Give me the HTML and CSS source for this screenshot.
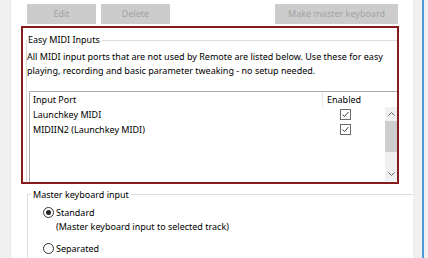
FILE: index.html
```html
<!DOCTYPE html>
<html>
<head>
<meta charset="utf-8">
<link rel="stylesheet" href="styles.css">
</head>
<body>
<div class="window">
  <div class="lstrip"></div>
  <div class="main">
    <div class="toolbar">
      <div class="btn btn-edit">Edit</div>
      <div class="btn btn-delete">Delete</div>
      <div class="btn btn-master">Make master keyboard</div>
    </div>
    <div class="highlight">
      <fieldset class="group group-easy">
        <legend class="legend-easy">Easy MIDI Inputs</legend>
        <p class="desc">All MIDI input ports that are not used by Remote are listed below. Use these for easy<br>playing, recording and basic parameter tweaking - no setup needed.</p>
        <div class="listview">
          <div class="lv-header">
            <div class="col-port">Input Port</div>
            <div class="col-enabled">Enabled</div>
          </div>
          <div class="lv-body">
            <div class="lv-rows">
              <div class="lv-row">
                <div class="col-port">Launchkey MIDI</div>
                <div class="col-enabled"><span class="check"><svg width="11" height="11" viewBox="0 0 11 11"><path d="M2.5 5.5 L4.5 7.5 L8.5 3" fill="none" stroke="#444" stroke-width="1"/></svg></span></div>
              </div>
              <div class="lv-row">
                <div class="col-port">MIDIIN2 (Launchkey MIDI)</div>
                <div class="col-enabled"><span class="check"><svg width="11" height="11" viewBox="0 0 11 11"><path d="M2.5 5.5 L4.5 7.5 L8.5 3" fill="none" stroke="#444" stroke-width="1"/></svg></span></div>
              </div>
            </div>
            <div class="scrollbar">
              <div class="sb-arrow"><svg width="7" height="4" viewBox="0 0 7 4"><path d="M0.5 3.5 L3.5 0.5 L6.5 3.5" fill="none" stroke="#606060" stroke-width="1"/></svg></div>
              <div class="sb-thumb"></div>
              <div class="sb-track"></div>
              <div class="sb-arrow"><svg width="7" height="4" viewBox="0 0 7 4"><path d="M0.5 0.5 L3.5 3.5 L6.5 0.5" fill="none" stroke="#606060" stroke-width="1"/></svg></div>
            </div>
          </div>
        </div>
      </fieldset>
    </div>
    <fieldset class="group group-master">
      <legend class="legend-master">Master keyboard input</legend>
      <div class="radio-row">
        <span class="radio checked"></span>
        <span>Standard</span>
      </div>
      <div class="radio-sub">(Master keyboard input to selected track)</div>
      <div class="radio-row radio-sep">
        <span class="radio"></span>
        <span>Separated</span>
      </div>
    </fieldset>
  </div>
  <div class="rstrip"><div class="blue"></div></div>
</div>
</body>
</html>
```

FILE: styles.css
```css
html, body {
  margin: 0;
  padding: 0;
  background: #ffffff;
}
body {
  font-family: "Noto Sans", "Open Sans", sans-serif;
  font-size: 9px;
  color: #000;
}
.window {
  display: flex;
  width: 428px;
  height: 258px;
  overflow: hidden;
}
.lstrip {
  width: 10px;
  background: #f0f0f0;
  border-right: 1px solid #e6e6e6;
  flex: none;
}
.main {
  width: 402px;
  flex: none;
  background: #fff;
  overflow: hidden;
}
.rstrip {
  width: 15px;
  flex: none;
  background: #f0f0f0;
  display: flex;
  padding-left: 9px;
  box-sizing: border-box;
}
.blue {
  width: 2px;
  background: #4a9ae0;
}
.toolbar {
  display: flex;
  margin-top: 4px;
  height: 20px;
  padding-left: 16px;
  padding-right: 15px;
  gap: 5px;
}
.btn {
  background: #cccccc;
  color: #a3a3a3;
  height: 20px;
  line-height: 20px;
  text-align: center;
  box-sizing: border-box;
}
.btn-edit, .btn-delete { width: 69px; }
.btn-master { width: 123px; margin-left: auto; }
.highlight {
  margin-top: 2px;
  margin-left: 10px;
  width: 378px;
  height: 158px;
  border: 2px solid #851c1c;
  box-sizing: border-box;
  overflow: hidden;
}
.group {
  margin: 0;
  padding: 0;
  border: 1px solid #dcdcdc;
  min-width: 0;
}
.group-easy {
  margin: 5px -10px 0 3px;
  height: 200px;
}
.legend-easy {
  padding: 0 2px 0 1px;
  margin-left: 0;
  line-height: 14px;
}
.desc {
  margin: 3px 0 0 0;
  line-height: 14px;
}
.listview {
  margin: 13px 0 0 2px;
  border: 1px solid #aaaaaa;
  height: 120px;
}
.lv-header, .lv-row {
  display: flex;
  height: 15px;
  line-height: 15px;
}
.col-port {
  width: 289px;
  padding-left: 3px;
}
.lv-header .col-port {
  border-right: 1px solid #e5e5e5;
}
.col-enabled {
  padding-left: 4px;
}
.lv-row .col-enabled {
  padding-left: 18px;
  display: flex;
  align-items: center;
}
.check {
  display: block;
  width: 11px;
  height: 11px;
  box-sizing: border-box;
  border: 1px solid #6b6b6b;
}
.check svg { display: block; margin: -1px; }
.lv-body {
  display: flex;
}
.lv-rows { flex: 1; }
.scrollbar {
  width: 12px;
  height: 74px;
  margin-right: 8px;
  background: #f0f0f0;
  display: flex;
  flex-direction: column;
}
.sb-arrow {
  height: 14px;
  display: flex;
  align-items: center;
  justify-content: center;
}
.sb-thumb {
  height: 31px;
  background: #cdcdcd;
}
.sb-track { flex: 1; }
.group-master {
  margin: 3px -10px 0 16px;
  height: 100px;
  padding-left: 15px;
}
.legend-master {
  padding: 0 2px 0 2px;
  margin-left: -12px;
  line-height: 15px;
}
.radio-row {
  display: flex;
  align-items: center;
  gap: 2px;
  height: 15px;
  margin-top: 3px;
}
.radio {
  width: 11px;
  height: 11px;
  border: 1px solid #333;
  border-radius: 50%;
  box-sizing: border-box;
  display: flex;
  align-items: center;
  justify-content: center;
}
.radio.checked::after {
  content: "";
  width: 5px;
  height: 5px;
  border-radius: 50%;
  background: #222;
}
.radio-sub {
  padding-left: 13px;
  line-height: 14px;
}
.radio-sep { margin-top: 7px; }
```
